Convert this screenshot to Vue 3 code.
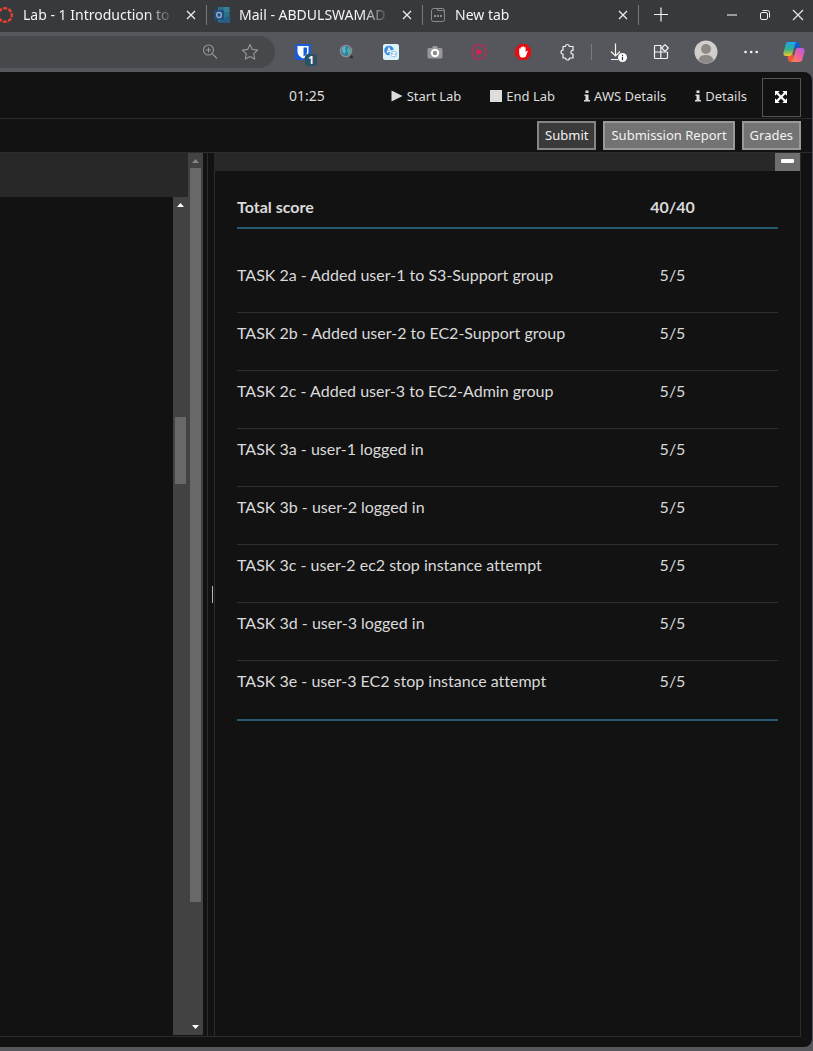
<script setup>
const tabs = [
  { title: 'Lab - 1 Introduction to', icon: 'canvas' },
  { title: 'Mail - ABDULSWAMAD', icon: 'outlook' },
  { title: 'New tab', icon: 'blank' },
]

const tasks = [
  { name: 'TASK 2a - Added user-1 to S3-Support group', score: '5/5' },
  { name: 'TASK 2b - Added user-2 to EC2-Support group', score: '5/5' },
  { name: 'TASK 2c - Added user-3 to EC2-Admin group', score: '5/5' },
  { name: 'TASK 3a - user-1 logged in', score: '5/5' },
  { name: 'TASK 3b - user-2 logged in', score: '5/5' },
  { name: 'TASK 3c - user-2 ec2 stop instance attempt', score: '5/5' },
  { name: 'TASK 3d - user-3 logged in', score: '5/5' },
  { name: 'TASK 3e - user-3 EC2 stop instance attempt', score: '5/5' },
]
</script>

<template>
  <div class="browser">
    <header class="tabstrip">
      <div v-for="tab in tabs" :key="tab.title" class="tab">
        <svg v-if="tab.icon === 'canvas'" class="favicon" viewBox="0 0 16 16">
          <circle cx="7" cy="8" r="6.8" fill="none" stroke="#e8412f" stroke-width="2.400" stroke-dasharray="4.100 1.240" stroke-dashoffset="2" />
        </svg>
        <svg v-else-if="tab.icon === 'outlook'" class="favicon" viewBox="0 0 16 16">
          <rect x="4" y="0" width="11.5" height="12" fill="#2b6f8c" />
          <rect x="9.5" y="0" width="6" height="5" fill="#347f95" />
          <path d="M4 15.5V9l6 3 6-4.500v8z" fill="#2d6d90" />
          <path d="M5 15.500 16 8v7.500z" fill="#255d86" />
          <rect x="0" y="3" width="10" height="10" rx="1" fill="#1f4f7f" />
          <ellipse cx="5" cy="8" rx="2.300" ry="2.600" fill="none" stroke="#a9b6c4" stroke-width="1.300" />
        </svg>
        <svg v-else class="favicon" viewBox="0 0 16 16" fill="none" stroke="#8b8c8f">
          <path d="M1.500 3.500a2 2 0 0 1 2-2h3.300l1 2h4.700a2 2 0 0 1 2 2v7a2 2 0 0 1-2 2h-9a2 2 0 0 1-2-2zM7 1.500h5.500a2 2 0 0 1 2 2v2" />
          <path d="M4 9h2M7 9h2M10 9h2" stroke-width="1.800" />
        </svg>
        <span class="tab-title">{{ tab.title }}</span>
        <button class="plain close" :aria-label="'Close ' + tab.title">
          <svg width="16" height="16" viewBox="0 0 16 16" stroke="#f0f0f0" stroke-width="1.200"><path d="M4 4l8 8M12 4l-8 8" /></svg>
        </button>
      </div>
      <button class="plain new-tab" aria-label="New tab">
        <svg width="16" height="16" viewBox="0 0 16 16" stroke="#f2f2f2" stroke-width="1.200"><path d="M1 7.500h14M8 .5v14" /></svg>
      </button>
      <div class="window-controls">
        <button class="plain" aria-label="Minimize">
          <svg width="12" height="12" viewBox="0 0 12 12"><path d="M1 6h10" stroke="#9a9b9d" stroke-width="2" /></svg>
        </button>
        <button class="plain" aria-label="Restore">
          <svg width="12" height="12" viewBox="0 0 12 12" fill="none" stroke="#f0f0f0"><rect x="1.500" y="3.500" width="7" height="7" rx="1.500" /><path d="M3.500 1.500h5a2 2 0 0 1 2 2v5" /></svg>
        </button>
        <button class="plain" aria-label="Close window">
          <svg width="12" height="12" viewBox="0 0 12 12" stroke="#e8e8e8" stroke-width="1.200"><path d="M1 1l10 10M11 1L1 11" /></svg>
        </button>
      </div>
    </header>

    <nav class="toolbar" aria-label="Browser toolbar">
      <div class="address">
        <button class="plain" aria-label="Zoom">
          <svg width="16" height="16" viewBox="0 0 16 16" fill="none" stroke="#98999b" stroke-width="1.100"><circle cx="6.500" cy="6" r="5" /><path d="M10.200 9.700 15 14.500M6.500 3.500v5M4 6h5" /></svg>
        </button>
        <button class="plain" aria-label="Add to favorites">
          <svg width="18" height="18" viewBox="0 0 18 18" fill="none" stroke="#98999b" stroke-width="1.100" stroke-linejoin="round"><path d="M9 1.500l2.300 4.900 5.300.7-3.900 3.700 1 5.300L9 13.500l-4.700 2.600 1-5.300L1.400 7.100l5.300-.7z" /></svg>
        </button>
      </div>
      <div class="extensions">
        <button class="plain tool badge-host" aria-label="Password manager">
          <svg width="18" height="18" viewBox="0 0 18 18"><rect x="1" y="1" width="16" height="16" rx="2" fill="#175ddc" /><path d="M3.500 3h11v6c0 3-2.500 5-5.500 6.500C6 14 3.500 12 3.500 9z" fill="#fff" /><path d="M9.500 4.500H13V9c0 2-1.500 3.400-3.500 4.500z" fill="#175ddc" /></svg>
          <span class="badge">1</span>
        </button>
        <button class="plain tool" aria-label="Search globe">
          <svg width="16" height="16" viewBox="0 0 16 16"><path d="M10.500 11l3 3" stroke="#2f3438" stroke-width="2.600" /><circle cx="7" cy="7" r="5.600" fill="#2f7f9e" stroke="#8d9092" stroke-width="1.400" /><path d="M3 5c1-2 2.500-2.500 4-2.500L6 5l1 2-1.500 3C4 9 3 7 3 5z" fill="#5fb3c9" /><path d="M8.500 3.500c2 .5 3 2 3 3.500s-1 3-2 3.500L8.500 8z" fill="#57b39a" /></svg>
        </button>
        <button class="plain tool" aria-label="Translate">
          <svg width="16" height="16" viewBox="0 0 16 16"><rect width="16" height="16" rx="2" fill="#d9f3f6" /><circle cx="6" cy="6.500" r="4.800" fill="#3a8be0" /><path d="M4 9l2-5 2 5M4.800 7.500h2.400" fill="none" stroke="#fff" stroke-width="1.100" /><circle cx="10.800" cy="10" r="4" fill="#9dcdf3" stroke="#e8f7fb" /><path d="M9.500 8.500h2.500l-2.500 3h3" fill="none" stroke="#fff" stroke-width="1.100" /></svg>
        </button>
        <button class="plain tool" aria-label="Screenshot">
          <svg width="16" height="16" viewBox="0 0 16 16"><path d="M2 4h3l1-2h4l1 2h3a1.500 1.500 0 0 1 1.500 1.500V13a1.500 1.500 0 0 1-1.500 1.500H2A1.500 1.500 0 0 1 .5 13V5.500A1.500 1.500 0 0 1 2 4z" fill="#97989a" /><circle cx="8" cy="9" r="3.200" fill="#8b8c8e" stroke="#fff" stroke-width="2" /></svg>
        </button>
        <button class="plain tool" aria-label="Video player">
          <svg width="16" height="16" viewBox="0 0 16 16"><circle cx="8" cy="8" r="7.200" fill="none" stroke="#b82c55" stroke-width="1.500" /><path d="M5.500 4.200 12 8l-6.500 3.800z" fill="#dc1f50" /></svg>
        </button>
        <button class="plain tool" aria-label="Ad blocker">
          <svg width="16" height="16" viewBox="0 0 16 16"><path d="M4.700 0h6.600L16 4.700v6.600L11.300 16H4.700L0 11.300V4.700z" fill="#e30d12" /><path d="M4.200 9V5a.8.8 0 0 1 1.600 0V3.600a.8.8 0 0 1 1.600 0V3a.8.8 0 0 1 1.600 0v.8a.8.8 0 0 1 1.600 0v4.400l1-1.200c.6-.6 1.400 0 1 .8L11 12c-1 2-5.500 2.200-6.300 0z" fill="#fff" /></svg>
        </button>
        <button class="plain tool" aria-label="Extensions">
          <svg width="18" height="18" viewBox="0 0 18 18" fill="none" stroke="#f2f2f2" stroke-width="1.200"><path d="M5 3.500h2.300a2 2 0 0 1 4 0H15v4c-2.800-.4-2.800 3.900 0 3.500v4h-3.500a2 2 0 0 1-4 0H5v-3.800a2 2 0 0 1 0-4z" stroke-linejoin="round" /></svg>
        </button>
        <span class="divider"></span>
        <button class="plain tool" aria-label="Downloads">
          <svg width="20" height="20" viewBox="0 0 20 20"><path d="M7.500 1.500v12M3 9.500l4.500 4.500L12 9.500M3 17.500h7" fill="none" stroke="#f4f4f4" stroke-width="1.200" /><circle cx="14.500" cy="15.500" r="4.500" fill="#fff" /><path d="M14.500 12.700v1.200M14.500 14.700v3.600" stroke="#333" stroke-width="1.200" /></svg>
        </button>
        <button class="plain tool" aria-label="Apps">
          <svg width="18" height="16" viewBox="0 0 18 16" fill="none" stroke="#f2f2f2" stroke-width="1.200"><path d="M8.500 1.500h-6a1 1 0 0 0-1 1v11a1 1 0 0 0 1 1h11a1 1 0 0 0 1-1V8M7.800 1.500v13M1.500 8h13" /><path d="M12 .7l3.300 3.300L12 7.300 8.700 4z" fill="#56575c" stroke-linejoin="round" /></svg>
        </button>
        <button class="plain tool" aria-label="Profile">
          <svg width="24" height="24" viewBox="0 0 24 24"><circle cx="12" cy="12" r="11.500" fill="#d1cfcb" /><circle cx="12" cy="9" r="5" fill="#8d8984" /><path d="M4.200 20.200C6 15.500 9 15 12 15s6 .5 7.800 5.200a11.500 11.500 0 0 1-15.600 0z" fill="#8d8984" /></svg>
        </button>
        <button class="plain tool" aria-label="Settings and more">
          <svg width="16" height="16" viewBox="0 0 16 16" fill="#f5f5f5"><circle cx="3.500" cy="8" r="1.300" /><circle cx="9.200" cy="8" r="1.300" /><circle cx="14.700" cy="8" r="1.300" /></svg>
        </button>
        <button class="plain tool last" aria-label="Copilot">
          <svg width="22" height="22" viewBox="0 0 22 22">
            <defs>
              <linearGradient id="cool" x1="0" y1="0" x2="0" y2="1"><stop offset="0" stop-color="#19a7ef" /><stop offset=".5" stop-color="#2faf8f" /><stop offset="1" stop-color="#f3c52b" /></linearGradient>
              <linearGradient id="warm" x1="1" y1="0" x2="0" y2="1"><stop offset="0" stop-color="#a55cf0" /><stop offset=".5" stop-color="#ee5f9c" /><stop offset="1" stop-color="#ff8a3c" /></linearGradient>
            </defs>
            <path d="M9 1h5c2 0 2.500 1.500 3 3l.7 2.500H14c-2 0-2.500 1-3 3z" fill="#1558cf" />
            <path d="M5.500 1H14c-1.500.5-2 2-2.500 4L9.300 13c-.5 1.500-1.300 2-2.800 2H3C.8 15 0 13.500.6 11l2-7.500C3.200 1.700 4 1 5.500 1z" fill="url(#cool)" />
            <path d="M4.500 15h2c2 0 2.700-1 3.200-2.500L11 17l-2 4H8c-2 0-2.500-1-3-3z" fill="#f2593a" />
            <path d="M16.500 21H8c1.500-.5 2-2 2.500-4l2.200-8c.5-1.500 1.300-2 2.800-2H19c2.200 0 3 1.500 2.400 4l-2 7.500c-.6 1.800-1.400 2.500-2.900 2.500z" fill="url(#warm)" />
          </svg>
        </button>
      </div>
    </nav>

    <main class="page">
      <div class="lab-bar">
        <span class="timer">01:25</span>
        <a href="#start" class="lab-link">
          <svg width="12" height="12" viewBox="0 0 12 12" fill="#ddd"><path d="M.5.5 11.500 6 .5 11.500z" /></svg>Start Lab
        </a>
        <a href="#end" class="lab-link">
          <svg width="12" height="12" viewBox="0 0 12 12" fill="#ddd"><path d="M0 0h12v12H0z" /></svg>End Lab
        </a>
        <a href="#aws" class="lab-link">
          <svg width="6" height="12" viewBox="0 0 6 12" fill="#ddd"><path d="M1.500.5h3v2.500h-3zM.5 4.500h4V10H6v1.500H0V10h1.500V6h-1z" /></svg>AWS Details
        </a>
        <a href="#details" class="lab-link">
          <svg width="6" height="12" viewBox="0 0 6 12" fill="#ddd"><path d="M1.500.5h3v2.500h-3zM.5 4.500h4V10H6v1.500H0V10h1.500V6h-1z" /></svg>Details
        </a>
        <button class="expand" aria-label="Full screen">
          <svg width="12" height="12" viewBox="0 0 12 12" fill="#fff"><path d="M0 0h4.700L0 4.700zM12 0v4.700L7.300 0zM0 12V7.300L4.700 12zM12 12H7.300L12 7.300z" /><path d="M2 2l8 8M10 2l-8 8" stroke="#fff" stroke-width="2.200" /></svg>
        </button>
      </div>

      <div class="action-bar">
        <button class="action dark">Submit</button>
        <button class="action">Submission Report</button>
        <button class="action">Grades</button>
      </div>

      <div class="workspace">
        <section class="terminal" aria-label="Terminal">
          <div class="terminal-main">
            <div class="terminal-head"></div>
            <div class="terminal-body">
              <div class="track inner">
                <svg width="7" height="4" viewBox="0 0 7 4"><path d="M3.500 0 7 4H0z" fill="#fff" /></svg>
                <span class="before"></span>
                <span class="thumb"></span>
                <span class="after"></span>
              </div>
            </div>
          </div>
          <div class="track outer">
            <svg width="7" height="4" viewBox="0 0 7 4"><path d="M3.500 0 7 4H0z" fill="#868686" /></svg>
            <span class="thumb"></span>
            <span class="after"></span>
            <svg width="7" height="4" viewBox="0 0 7 4"><path d="M3.500 4 7 0H0z" fill="#fff" /></svg>
          </div>
        </section>

        <div class="splitter"><span class="grip"></span></div>

        <section class="report">
          <div class="report-head">
            <button class="collapse" aria-label="Collapse report"><span></span></button>
          </div>
          <div class="report-body">
            <table>
              <thead>
                <tr><th scope="col">Total score</th><th scope="col" class="score">40/40</th></tr>
              </thead>
              <tbody>
                <tr class="spacer" aria-hidden="true"><td colspan="2"></td></tr>
                <tr v-for="task in tasks" :key="task.name" class="task">
                  <td>{{ task.name }}</td>
                  <td class="score">{{ task.score }}</td>
                </tr>
              </tbody>
            </table>
          </div>
        </section>
      </div>
    </main>
  </div>
</template>

<style>
body {
  margin: 0;
  background: #56575c;
}
</style>

<style scoped>
* {
  box-sizing: border-box;
}
.browser {
  display: flex;
  flex-direction: column;
  min-height: 100vh;
  overflow: hidden;
  background: #56575c;
  font-family: "Noto Sans", "Open Sans", sans-serif;
}
svg {
  display: block;
  flex: none;
}
.plain {
  display: flex;
  align-items: center;
  justify-content: center;
  flex: none;
  padding: 0;
  border: 0;
  background: none;
}

.tabstrip {
  display: flex;
  align-items: center;
  height: 32px;
  padding-bottom: 2px;
  background: #38393c;
}
.tab {
  display: flex;
  align-items: center;
  gap: 9px;
  flex: none;
  width: 216px;
  height: 20px;
  padding: 0 7px;
  border-right: 1px solid #77787a;
}
.tab:first-child {
  margin-left: -9px;
}
.favicon {
  width: 16px;
  height: 16px;
}
.tab-title {
  flex: 1;
  min-width: 0;
  overflow: hidden;
  white-space: nowrap;
  color: #f4f4f4;
  font-size: 14px;
  line-height: 20px;
  mask-image: linear-gradient(to right, #000 calc(100% - 28px), transparent);
}
.close {
  width: 16px;
  height: 16px;
}
.new-tab {
  width: 43px;
  height: 30px;
}
.window-controls {
  display: flex;
  gap: 21px;
  margin-left: auto;
  padding-right: 9px;
}

.toolbar {
  display: flex;
  align-items: center;
  height: 40px;
}
.address {
  display: flex;
  align-items: center;
  justify-content: flex-end;
  gap: 23px;
  flex: 1;
  height: 32px;
  padding-right: 16px;
  border-radius: 0 16px 16px 0;
  background: #47484b;
}
.extensions {
  display: flex;
  align-items: center;
  padding: 0 8px 0 6px;
}
.tool {
  width: 44px;
  height: 32px;
}
.tool.last {
  width: 33px;
  justify-content: flex-end;
}
.badge-host {
  position: relative;
}
.badge {
  position: absolute;
  right: 8px;
  bottom: 2px;
  width: 12px;
  height: 12px;
  border-radius: 3px;
  background: #2b5166;
  color: #fff;
  font: bold 10px/12px "Noto Sans", sans-serif;
  text-align: center;
}
.divider {
  width: 1px;
  height: 16px;
  margin: 0 4px 0 2px;
  background: #7a7b7e;
}

.page {
  display: flex;
  flex-direction: column;
  flex: 1;
  margin: 0 1px 4px 0;
  padding-bottom: 10px;
  border-radius: 0 8px 8px 0;
  background: #121212;
}
.lab-bar {
  display: flex;
  align-items: center;
  justify-content: flex-end;
  height: 47px;
  padding: 4px 11px 0 0;
  border-bottom: 1px solid #2c2c2c;
  color: #dddddd;
}
.timer {
  margin-right: 52px;
  padding-bottom: 2px;
  font-size: 14px;
  line-height: 20px;
}
.lab-link {
  display: flex;
  align-items: center;
  gap: 4px;
  padding: 0 15px 2px 14px;
  color: inherit;
  font-size: 13px;
  line-height: 20px;
  text-decoration: none;
}
.expand {
  display: flex;
  align-items: center;
  justify-content: center;
  width: 39px;
  height: 39px;
  padding: 0 1px 0 0;
  border: 1px solid #555;
  background: #121212;
}
.action-bar {
  display: flex;
  align-items: center;
  justify-content: flex-end;
  gap: 7px;
  height: 34px;
  padding-right: 11px;
  border-bottom: 1px solid #2c2c2c;
}
.action {
  height: 29px;
  padding: 0 6px 2px;
  border: 2px solid #999;
  background: #737373;
  color: #f2f2f2;
  font: 13px/20px "Noto Sans", "Open Sans", sans-serif;
}
.action.dark {
  border-color: #858585;
  background: #3a3a3a;
}

.workspace {
  display: flex;
  flex: 1;
  margin-right: 11px;
  border-right: 1px solid #2c2c2c;
  border-bottom: 1px solid #2c2c2c;
}
.terminal {
  display: flex;
  flex: none;
  width: 203px;
  padding-bottom: 1px;
}
.terminal-main {
  display: flex;
  flex-direction: column;
  flex: 1;
}
.terminal-head {
  height: 44px;
  background: #282828;
}
.terminal-body {
  display: flex;
  justify-content: flex-end;
  flex: 1;
}
.track {
  display: flex;
  flex-direction: column;
  align-items: center;
  width: 15px;
  background: #424242;
}
.track .thumb {
  width: 11px;
  background: #686868;
}
.inner {
  padding-top: 6px;
}
.inner .before {
  flex: 210;
}
.inner .thumb {
  flex: 67;
}
.inner .after {
  flex: 551;
}
.outer {
  padding: 6px 0;
}
.outer .thumb {
  flex: 734;
  margin-top: 5px;
}
.outer .after {
  flex: 123;
}
.splitter {
  display: flex;
  align-items: center;
  justify-content: flex-end;
  flex: none;
  width: 7px;
  margin-left: 4px;
  padding-right: 1px;
  border-left: 1px solid #2c2c2c;
}
.grip {
  width: 1px;
  height: 17px;
  background: #b5b5b5;
}
.report {
  display: flex;
  flex-direction: column;
  flex: 1;
  min-width: 0;
}
.report-head {
  display: flex;
  justify-content: flex-end;
  height: 18px;
  background: #282828;
}
.collapse {
  display: flex;
  justify-content: center;
  width: 25px;
  padding: 6px 0 0;
  border: 0;
  background: #6e6e6e;
}
.collapse span {
  width: 13px;
  height: 4px;
  border-radius: 1px;
  background: #fff;
}
.report-body {
  flex: 1;
  padding: 16px 22px;
  border-left: 1px solid #2c2c2c;
}
table {
  width: 100%;
  border-collapse: separate;
  border-spacing: 0;
  table-layout: fixed;
  color: #dadada;
  font-family: Lato, sans-serif;
  font-size: 16px;
  font-variant-ligatures: none;
  line-height: 22px;
}
th,
td {
  padding: 0;
  text-align: left;
  vertical-align: top;
}
th {
  height: 42px;
  padding-top: 9px;
  border-bottom: 2px solid #265a73;
  font-weight: bold;
}
.score {
  width: 39%;
  text-align: center;
}
.spacer td {
  height: 26px;
}
.task td {
  height: 58px;
  padding-top: 9px;
  border-bottom: 1px solid #2f2f2f;
}
.task:last-child td {
  height: 60px;
  border-bottom: 2px solid #265a73;
}
</style>
